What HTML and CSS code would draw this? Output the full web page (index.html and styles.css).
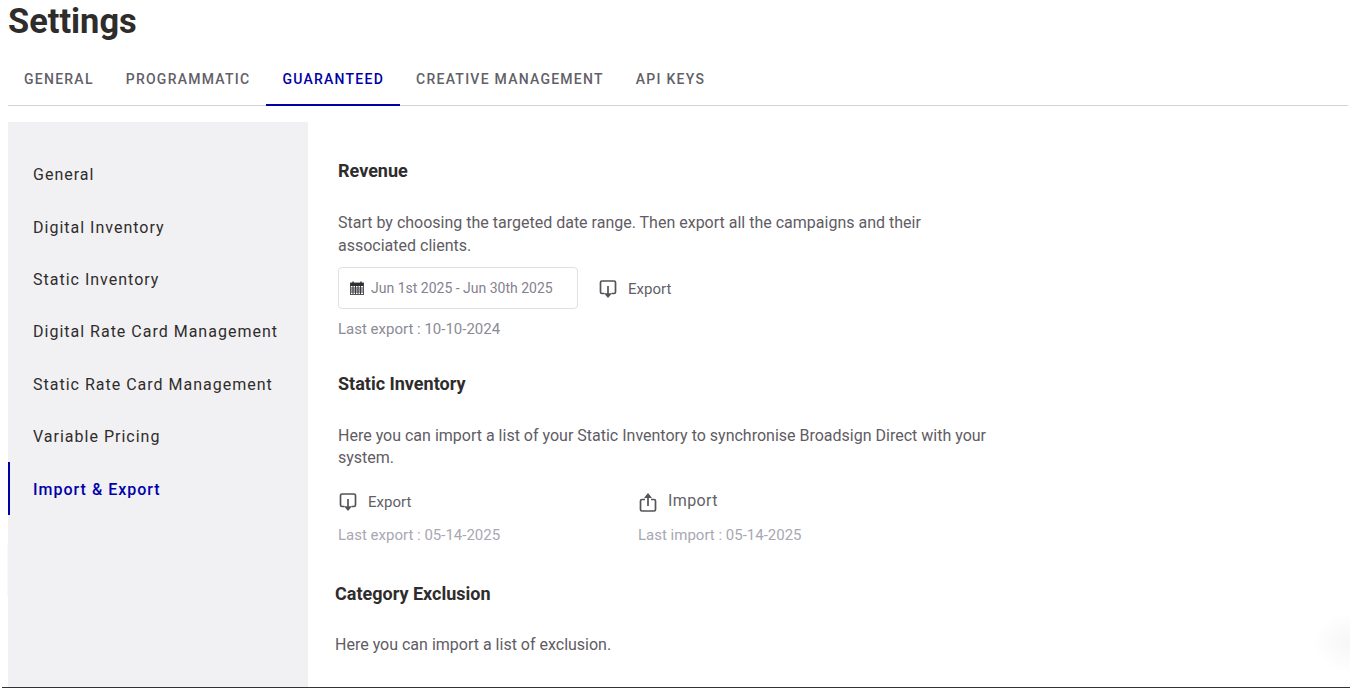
FILE: index.html
```html
<!DOCTYPE html>
<html lang="en">
<head>
    <meta charset="UTF-8">
    <title>Settings</title>
    <link rel="stylesheet" href="styles.css">
</head>
<body>
    <div class="page">
        <h1 class="page-title">Settings</h1>
        <nav class="tabs">
            <a href="#" class="tab">General</a>
            <a href="#" class="tab">Programmatic</a>
            <a href="#" class="tab tab-active">Guaranteed</a>
            <a href="#" class="tab">Creative Management</a>
            <a href="#" class="tab">API Keys</a>
        </nav>
        <div class="layout">
            <aside class="sidebar">
                <a href="#" class="side-link">General</a>
                <a href="#" class="side-link">Digital Inventory</a>
                <a href="#" class="side-link">Static Inventory</a>
                <a href="#" class="side-link">Digital Rate Card Management</a>
                <a href="#" class="side-link">Static Rate Card Management</a>
                <a href="#" class="side-link">Variable Pricing</a>
                <a href="#" class="side-link side-link-active">Import &amp; Export</a>
            </aside>
            <main class="content">
                <section class="block block-revenue">
                    <h2>Revenue</h2>
                    <p>Start by choosing the targeted date range. Then export all the campaigns and their associated clients.</p>
                    <div class="actions">
                        <div class="date-field">
                            <svg class="cal-icon" width="14" height="14" viewBox="0 0 14 14">
                                <rect x="0.5" y="2" width="13" height="11.5" fill="#fff" stroke="#55555c"/>
                                <rect x="0.5" y="2" width="13" height="3" fill="#2e2e30"/>
                                <path d="M3 .5v2.500M11 .5v2.500" stroke="#2e2e30" stroke-width="1.4"/>
                                <path d="M1 7h12M1 9h12M1 11h12M3 5v8M5.500 5v8M8 5v8M10.500 5v8" stroke="#3a3a3e" stroke-width="1"/>
                            </svg>
                            <span>Jun 1st 2025 - Jun 30th 2025</span>
                        </div>
                        <a href="#" class="action">
                            <svg class="icon" width="20" height="20" viewBox="0 0 20 20"><path d="M6.500 14.500H4a1.500 1.500 0 0 1-1.500-1.500V3.500A1.500 1.500 0 0 1 4 2h12a1.500 1.500 0 0 1 1.500 1.500V13a1.500 1.500 0 0 1-1.500 1.500h-2.500" fill="none" stroke="#55525a" stroke-width="1.7"/><path d="M10 7v8" stroke="#55525a" stroke-width="1.7"/><path d="M6 14.200h8L10 19z" fill="#55525a"/></svg>
                            <span>Export</span>
                        </a>
                    </div>
                    <div class="last-run">Last export : 10-10-2024</div>
                </section>
                <section class="block block-static">
                    <h2>Static Inventory</h2>
                    <p>Here you can import a list of your Static Inventory to synchronise Broadsign Direct with your system.</p>
                    <div class="columns">
                        <div class="column">
                            <a href="#" class="action">
                                <svg class="icon" width="20" height="20" viewBox="0 0 20 20"><path d="M6.500 14.500H4a1.500 1.500 0 0 1-1.500-1.500V3.500A1.500 1.500 0 0 1 4 2h12a1.500 1.500 0 0 1 1.500 1.500V13a1.500 1.500 0 0 1-1.500 1.500h-2.500" fill="none" stroke="#55525a" stroke-width="1.7"/><path d="M10 7v8" stroke="#55525a" stroke-width="1.7"/><path d="M6 14.200h8L10 19z" fill="#55525a"/></svg>
                                <span>Export</span>
                            </a>
                            <div class="last-run last-run-light">Last export : 05-14-2025</div>
                        </div>
                        <div class="column">
                            <a href="#" class="action action-import">
                                <svg class="icon" width="20" height="20" viewBox="0 0 20 20"><path d="M7 7.500H4A1.500 1.500 0 0 0 2.500 9v8.500A1.500 1.500 0 0 0 4 19h12a1.500 1.500 0 0 0 1.500-1.500V9A1.500 1.500 0 0 0 16 7.500h-3" fill="none" stroke="#55525a" stroke-width="1.7"/><path d="M10 14V5" stroke="#55525a" stroke-width="1.7"/><path d="M6 6h8l-4-5z" fill="#55525a"/></svg>
                                <span>Import</span>
                            </a>
                            <div class="last-run last-run-light">Last import : 05-14-2025</div>
                        </div>
                    </div>
                </section>
                <section class="block block-exclusion">
                    <h2>Category Exclusion</h2>
                    <p>Here you can import a list of exclusion.</p>
                </section>
            </main>
        </div>
    </div>
    <div class="corner-glow"></div>
</body>
</html>
```

FILE: styles.css
```css
html, body {
    height: 100%;
}
body {
    font-family: 'Roboto', sans-serif;
    margin: 0;
    padding: 0;
    background-color: #fff;
    color: #5f5c64;
    overflow: hidden;
}
.page {
    height: 688px;
    box-sizing: border-box;
    margin-left: 2px;
    padding: 0 2px 0 6px;
    border-bottom: 1px solid #333;
    display: flex;
    flex-direction: column;
    overflow: hidden;
}
.page-title {
    margin: 0;
    height: 43px;
    font-size: 34.4px;
    line-height: 43px;
    font-weight: 700;
    color: #2f2c2c;
}
.tabs {
    display: flex;
    height: 63px;
    box-sizing: border-box;
    border-bottom: 1px solid #d2d2d6;
}
.tab {
    display: flex;
    align-items: center;
    height: 63px;
    box-sizing: border-box;
    padding: 19px 16px 11px;
    font-size: 14px;
    font-weight: 500;
    letter-spacing: 1.25px;
    text-transform: uppercase;
    text-decoration: none;
    color: #625f68;
}
.tab-active {
    padding-bottom: 9px;
    color: #0000a8;
    border-bottom: 2px solid #0000a8;
}
.layout {
    display: flex;
    flex: 1;
    min-height: 0;
    margin-top: 16px;
}
.sidebar {
    position: relative;
    width: 300px;
    flex-shrink: 0;
    background-color: #f1f1f3;
    padding-top: 25.9px;
    box-sizing: border-box;
}
/* faint sliver on the left edge of the panel */
.sidebar::before {
    content: '';
    position: absolute;
    left: -1px;
    top: 422px;
    width: 1px;
    height: 53px;
    background: #f8f8f9;
}
.side-link {
    display: flex;
    align-items: center;
    height: 52.4px;
    box-sizing: border-box;
    padding-top: 1.2px;
    padding-left: 25px;
    font-size: 16px;
    letter-spacing: 1px;
    text-decoration: none;
    color: #2f2c2c;
}
.side-link-active {
    padding-left: 23px;
    border-left: 2px solid #0000a8;
    color: #0000a8;
    font-weight: 500;
}
.content {
    flex: 1;
    padding: 0 30px;
}
.block h2 {
    margin: 0;
    font-size: 18px;
    line-height: 24px;
    font-weight: 700;
    color: #2f2c2c;
}
.block p {
    margin: 0;
    width: 660px;
    font-size: 16px;
    line-height: 22.5px;
}
.block-revenue {
    padding-top: 37px;
}
.block-revenue p {
    margin-top: 28px;
    width: 620px;
    line-height: 23px;
}
.actions {
    display: flex;
    align-items: center;
    margin-top: 10px;
}
.date-field {
    display: flex;
    align-items: center;
    gap: 7px;
    width: 240px;
    height: 42px;
    box-sizing: border-box;
    padding-left: 11px;
    border: 1px solid #e0e0e4;
    border-radius: 4px;
    font-size: 14px;
    color: #85828f;
}
.action {
    display: inline-flex;
    align-items: center;
    gap: 10px;
    font-size: 15px;
    text-decoration: none;
    color: #625f68;
}
.actions .action {
    margin-left: 20px;
    margin-top: 2px;
}
.last-run {
    margin-top: 10px;
    font-size: 15px;
    line-height: 20px;
    color: #8c8a96;
}
.last-run-light {
    margin-top: 9px;
    color: #a9a7b2;
}
.block-static {
    padding-top: 33px;
}
.block-static p {
    margin-top: 28.6px;
}
.columns {
    display: flex;
    margin-top: 22.4px;
}
.column {
    width: 300px;
}
.action-import {
    font-size: 16px;
    letter-spacing: 0.4px;
}
.action-import span {
    margin-top: -3px;
}
.block-exclusion {
    margin-left: -3px;
    padding-top: 37px;
}
.block-exclusion p {
    margin-top: 28px;
}
.corner-glow {
    position: absolute;
    right: -38px;
    top: 612px;
    width: 76px;
    height: 60px;
    border-radius: 50%;
    background: radial-gradient(closest-side, rgba(0,0,0,0.035), rgba(0,0,0,0));
}
```
